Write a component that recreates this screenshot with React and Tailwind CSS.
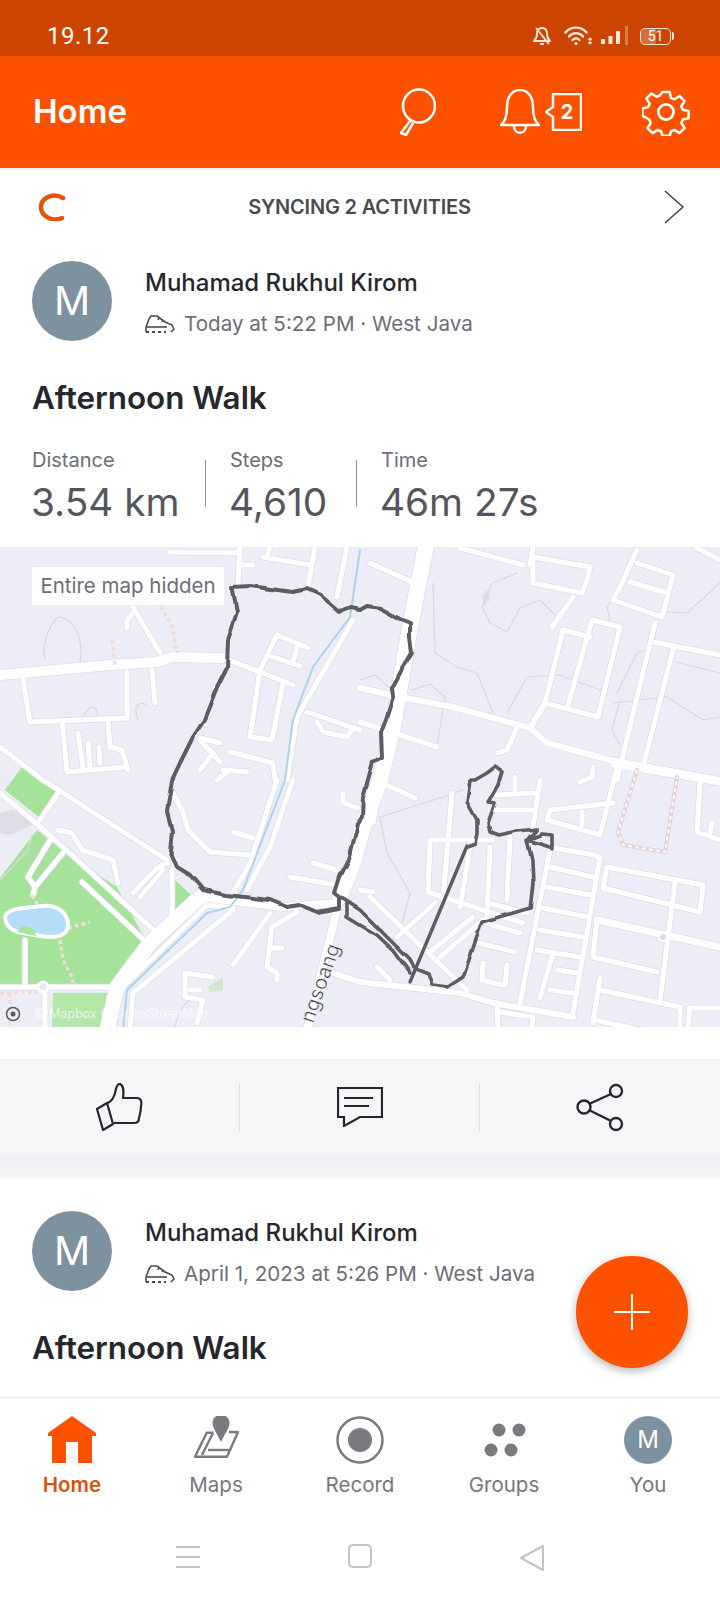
import React from "react";

const font = "font-[Inter,sans-serif]";

// all map coordinates are in page pixels, the svg viewBox starts at y=547
const bigRoads = [
  { w: 16, d: "M427 540L410 627L393 727L380 780L363 827L353 863L340 897" },
  { w: 8, d: "M340 897L332 930L307 1030" },
  { w: 10, d: "M0 675L110 665L157 662L173 657L223 658" },
  { w: 15, d: "M200 897L150 943L117 987L107 1030" },
  { w: 8, d: "M200 897L283 907L337 903" },
  { w: 6, d: "M333 973L360 982L460 993L493 1003L573 1017" },
  { w: 6, d: "M360 688L400 697L453 707L530 728L547 743L610 760L720 780" },
  { w: 7, d: "M597 920L720 947" },
  { w: 6, d: "M530 728L545 703" },
];

const roads = [
  "M170 552L240 553", "M240 548L238 583", "M240 565L253 565", "M263 557L310 565", "M270 547L267 557",
  "M315 547L308 587", "M347 547L337 597", "M133 607L160 653", "M133 613L127 620L127 628",
  "M23 680L30 722L127 718L127 672", "M152 670L155 703", "M62 720L67 772L125 767", "M108 722L110 747L122 750L128 770",
  "M78 733L83 767", "M88 743L90 767", "M99 747L100 763", "M0 747L43 780", "M223 658L260 672L293 685",
  "M277 635L308 648", "M277 635L260 670L250 737L272 740L283 683", "M297 647L293 662", "M267 655L300 666",
  "M353 620L297 717L287 780", "M307 712L360 730", "M317 722L323 732L347 737L353 728",
  "M277 780L250 863L233 893", "M293 780L270 847L247 890", "M200 738L220 743", "M200 740L220 762",
  "M230 752L273 763L275 780", "M213 753L200 770", "M223 770L247 772", "M230 770L217 780",
  "M43 780L167 860", "M0 793L52 837", "M60 790L40 820", "M52 837L28 877L35 887",
  "M58 830L72 833L82 850L113 860L118 883", "M63 853L35 887L33 895", "M52 837L157 933", "M82 882L147 943",
  "M133 893L157 868L167 863", "M140 897L163 870", "M172 870L172 920", "M25 940L25 983", "M0 987L110 987", "M45 990L45 1030",
  "M233 965L270 913", "M297 912L272 927L267 967L277 973L277 980", "M270 948L282 948",
  "M185 973L213 977", "M185 973L185 997L203 1000L197 1023", "M190 990L200 990",
  "M233 832L253 838", "M173 793L183 812L188 830L210 852L250 855", "M313 863L337 870", "M290 877L337 885", "M343 793L343 803L358 808",
  "M233 908L207 905L125 985", "M233 910L133 993L130 1030",
  "M370 563L412 582", "M460 548L523 565", "M533 557L590 567L587 580L582 593L533 583Z", "M533 548L530 565",
  "M573 597L552 627", "M637 563L673 575L662 617L613 600L620 587L637 550", "M630 582L667 593", "M720 560L697 548",
  "M563 630L545 703L598 717L620 627L592 620L568 705", "M563 630L590 637", "M655 623L617 780", "M653 642L720 655",
  "M673 650L643 767", "M517 728L507 750L498 753", "M360 722L437 747",
  "M382 783L415 798", "M380 783L373 823", "M493 840L430 840L428 892L523 923", "M452 793L443 900", "M470 847L460 907",
  "M490 847L487 917", "M510 837L507 900", "M540 780L533 827", "M497 795L535 793", "M495 810L533 810", "M515 777L515 790",
  "M550 850L520 1003", "M600 857L573 1013", "M553 848L595 855L600 860", "M550 867L593 877", "M547 887L590 895",
  "M543 908L587 917", "M540 930L583 937", "M537 950L580 957", "M553 953L540 998", "M557 970L577 973", "M550 990L573 993",
  "M488 903L527 913", "M485 923L520 933", "M478 943L515 952", "M483 963L482 980L503 985", "M507 965L505 985",
  "M370 897L467 990", "M360 890L373 892", "M397 937L435 903", "M440 957L483 920", "M430 952L473 917", "M377 967L390 980",
  "M607 867L703 885L700 912L603 888Z", "M675 883L660 1000", "M597 920L593 957L657 972",
  "M550 810L547 820L600 835L617 767", "M550 810L613 803", "M582 812L582 825", "M580 782L592 777L593 767",
  "M700 783L697 832L720 840", "M613 765L720 783", "M712 823L710 833",
  "M600 978L593 1023", "M600 990L680 1007L680 1030", "M595 1020L640 1030", "M690 1008L720 1008", "M690 1008L688 1030",
  "M497 1003L498 1030", "M500 1012L533 1017L532 1030",
];

const paths = [
  "M160 607L172 625L177 653", "M112 640L115 665", "M68 928L90 922", "M60 940L63 960L72 977L73 983", "M32 895L38 906",
  "M0 993L38 992", "M10 993L10 1030",
];

const contours = [
  "M433 583L435 653L457 667L477 673L493 713", "M482 607L492 583L517 573", "M482 607L490 623L507 632L520 608L540 600L557 617",
  "M507 713L527 677L560 675L600 690", "M610 620L607 607L623 583", "M720 583L687 613L667 612", "M617 693L637 653L650 648",
  "M675 662L720 673", "M613 703L667 697L703 720L720 717", "M380 817L387 853L410 893L400 930", "M380 817L443 797L463 790",
  "M45 660C40 640 55 616 60 617C75 620 84 640 80 662", "M82 722C85 708 95 702 97 712C98 718 96 722 95 722",
  "M138 720C132 705 140 700 146 705", "M360 680L375 675L392 690", "M412 690L430 684L445 697L437 747",
  "M620 700L612 730L620 745", "M0 880L28 850L32 835", "M175 1027C180 1000 195 995 205 1000",
];

const track1 =
  "M232 587L250 586L293 592L307 589L320 595L340 612L350 608L360 610L367 606L380 608L400 619L410 623L410 638L412 653L400 673L392 688L393 697L385 722L381 733L382 757L373 762L363 797L362 817L358 823L350 857L340 877L335 893L340 897L340 908L317 912L300 905L287 907L270 900L227 895L203 890L190 875L177 867L170 850L172 833L167 810L172 780L180 763L193 737L203 722L217 687L227 667L228 640L237 612L233 590Z";
const track2 =
  "M340 897L360 910L380 930L407 957L413 967L428 973L432 985L448 987L463 977L470 957L482 922L530 908L533 883L532 860L527 840L553 848L553 835L542 834L527 840L537 829L517 831L498 835L490 832L488 823L495 803L488 802L498 785L502 772L495 767L487 773L475 780L470 780L467 802L477 820L477 833L475 843L467 846";
const track3 = "M347 903L347 917L360 925L377 935L393 950L410 973";

const MapView = () => (
  <div className="relative h-[480px] w-full shrink-0 overflow-hidden bg-[#ecedf7]">
    <svg width="720" height="480" viewBox="0 547 720 480" className="block" fill="none" strokeLinecap="round" strokeLinejoin="round">
      <defs>
        <filter id="rough">
          <feTurbulence type="fractalNoise" baseFrequency="0.055" numOctaves="1" seed="4" />
          <feDisplacementMap in="SourceGraphic" scale="5" xChannelSelector="R" yChannelSelector="G" />
        </filter>
      </defs>
      <path d="M0 813L18 808L32 825L10 835L0 833Z" fill="#dedfe6" />
      <path d="M482 595L488 590L490 600L484 606Z" fill="#dedfe6" />
      <path d="M0 878L37 830L70 857L117 887L147 943L130 955L110 985L0 985Z" fill="#a5e39a" />
      <path d="M22 767L58 790L40 818L5 790Z" fill="#a5e39a" />
      <path d="M175 880L193 897L175 917Z" fill="#a5e39a" />
      <path d="M53 993L107 993L103 1027L52 1027Z" fill="#b2e7a9" />
      <path d="M208 987L223 977L223 990L210 992Z" fill="#cfe8cd" />
      {contours.map((d, i) => (
        <path key={i} d={d} stroke="#d7d8e2" strokeWidth="1.2" />
      ))}
      {roads.map((d, i) => (
        <path key={i} d={d} stroke="#dcdde6" strokeWidth="6.5" />
      ))}
      {bigRoads.map((r, i) => (
        <path key={i} d={r.d} stroke="#dcdde6" strokeWidth={r.w + 1.5} />
      ))}
      {roads.map((d, i) => (
        <path key={i} d={d} stroke="#ffffff" strokeWidth="5" />
      ))}
      {bigRoads.map((r, i) => (
        <path key={i} d={r.d} stroke="#ffffff" strokeWidth={r.w} />
      ))}
      <path d="M637 770L618 832L623 845L665 852L677 777" stroke="#e6cfd6" strokeWidth="4" />
      <path d="M637 770L618 832L623 845L665 852L677 777" stroke="#ffffff" strokeWidth="2" strokeDasharray="4 3" strokeLinecap="butt" />
      {paths.map((d, i) => (
        <path key={i} d={d} stroke="#f0dcd8" strokeWidth="3.5" strokeDasharray="4 3" strokeLinecap="butt" />
      ))}
      <path d="M360 550L350 617L313 667L293 720L285 780L243 890L230 907L207 913L127 990L123 1030" stroke="#a9d4ec" strokeWidth="2" />
      <path d="M5 918C6 908 22 908 42 906C56 904 68 912 68 925C68 938 52 938 40 936C28 932 8 936 5 918Z" fill="#b3ddf9" stroke="#ffffff" strokeWidth="4" />
      <path d="M17 932C22 922 34 925 36 936Z" fill="#a5e39a" />
      <circle cx="43" cy="987" r="5" fill="#e5e6ee" stroke="#ffffff" strokeWidth="3" />
      <circle cx="663" cy="937" r="4" fill="#d9dae4" stroke="#ffffff" strokeWidth="2" />
      <text x="0" y="0" transform="translate(313 1024) rotate(-70.5)" fontFamily="Inter, sans-serif" fontSize="20" fill="#3c3d44" stroke="#ffffff" strokeWidth="0.4">
        ngsoang
      </text>
      <g filter="url(#rough)">
        <path d={track1} stroke="#5c5d63" strokeWidth="4" />
        <path d={track2} stroke="#5c5d63" strokeWidth="3.6" />
        <path d={track3} stroke="#5c5d63" strokeWidth="3.6" />
      </g>
      <path d="M467 846L410 982" stroke="#5c5d63" strokeWidth="3.4" />
      <circle cx="13" cy="1014" r="6.5" fill="#ecedf0" stroke="#5a5b61" strokeWidth="1.5" />
      <circle cx="13" cy="1014" r="2.5" fill="#5a5b61" />
      <text x="34" y="1018" fontFamily="Inter, sans-serif" fontSize="12.5" fill="#ffffff" fillOpacity="0.7">
        © Mapbox © OpenStreetMap
      </text>
    </svg>
    <div className="absolute left-[32px] top-[20px] flex h-[38px] w-[192px] items-center justify-center rounded-[2px] bg-white text-[20.5px] text-[#6d6d78]">
      Entire map hidden
    </div>
  </div>
);

const ShoeIcon = () => (
  <svg width="31" height="19" viewBox="0 0 31 19" fill="none" stroke="#4a4b52" strokeWidth="1.6" strokeLinejoin="round">
    <path d="M1 12L4 4L6 1H12L20 7L27 10L29 14L26 17" />
    <path d="M1 12H22" />
    <path d="M1 12V17" />
    <path d="M14 3L13 5M18 5L17 7" />
    <path d="M1 17H4M7 17H10M13 17H16M19 17H21" strokeWidth="1.8" />
  </svg>
);

const Card = ({ top, when }) => (
  <div className={`${top} px-[32px]`}>
    <div className="flex h-[80px] gap-[33px]">
      <div className="flex h-[80px] w-[80px] shrink-0 items-center justify-center rounded-full bg-[#7d919f] text-[40px] text-white">M</div>
      <div className="flex flex-col">
        <div className="mt-[6px] text-[24px] leading-[32px] font-medium text-[#26272c]">Muhamad Rukhul Kirom</div>
        <div className="mt-[9px] flex h-[32px] items-center gap-[8px] text-[20.6px] text-[#6d6d78]">
          <ShoeIcon />
          <span>{when}</span>
        </div>
      </div>
    </div>
    <div className="mt-[37px] text-[31.4px] leading-[40px] font-semibold text-[#26272c]">Afternoon Walk</div>
  </div>
);

const Stat = ({ label, value, width }) => (
  <div className={width}>
    <div className="h-[30px] text-[20px] leading-[30px] text-[#6d6d78]">{label}</div>
    <div className="mt-[2px] -ml-[1px] text-[38.8px] leading-[50px] text-[#55565d]">{value}</div>
  </div>
);

const IconBell = () => (
  <svg width="40" height="46" viewBox="0 0 40 46" fill="none" stroke="white" strokeWidth="2.5" strokeLinejoin="round">
    <path d="M1 36C6 32 7 26 7 18C7 8 12 1 20 1C28 1 33 8 33 18C33 26 34 32 39 36Z" />
    <path d="M14 37C14 46 26 46 26 37" />
  </svg>
);

const Header = () => (
  <div className="flex h-[112px] shrink-0 items-center bg-[#fc5200] pl-[33px] text-white">
    <div className="w-[95px] text-[33px] font-semibold">Home</div>
    <svg className="ml-[272px]" width="36" height="48" viewBox="0 0 36 48" fill="none" stroke="white" strokeWidth="2.5">
      <ellipse cx="19" cy="18" rx="16" ry="16.5" />
      <path d="M10 33L1 45L6 47L13 35" strokeLinejoin="round" />
    </svg>
    <div className="ml-[64px]">
      <IconBell />
    </div>
    <div className="relative ml-[5px] flex h-[38px] w-[37px] items-center justify-center">
      <svg className="absolute inset-0" width="37" height="38" viewBox="0 0 37 38" fill="none" stroke="white" strokeWidth="2.5" strokeLinejoin="round">
        <path d="M8 1H36V37H8V24L1 19L8 14Z" />
      </svg>
      <span className="relative ml-[7px] text-[20px] font-bold">2</span>
    </div>
    <svg className="ml-[60px]" width="48" height="48" viewBox="0 0 24 24" fill="none" stroke="white" strokeWidth="1.4" strokeLinejoin="round">
      <circle cx="12" cy="12" r="3.8" />
      <path d="M10 1h4l.7 3.2 1.9.8 2.8-1.8 2.8 2.8-1.8 2.8.8 1.9 3.2.7v4l-3.2.7-.8 1.9 1.8 2.8-2.8 2.8-2.8-1.8-1.9.8-.7 2.5h-4l-.7-2.5-1.9-.8-2.8 1.8-2.8-2.8 1.8-2.8-.8-1.9L-1 14v-4l3.2-.7.8-1.9L1.2 4.6 4 1.8l2.8 1.8 1.9-.8z" transform="translate(1.1 1.1) scale(.91)" />
    </svg>
  </div>
);

const StatusBar = () => (
  <div className="flex h-[56px] shrink-0 items-center bg-[#cc4400] pt-[16px] pl-[47px] text-white">
    <div className="w-[486px] font-[Roboto,sans-serif] text-[24px] tracking-[0.5px]">19.12</div>
    <svg width="18" height="20" viewBox="0 0 18 20" fill="none" stroke="#ffe9dd" strokeWidth="1.9">
      <path d="M1 15C3 13 4 11 4 8C4 4 6 2 9 2C12 2 14 4 14 8C14 11 15 13 17 15Z" strokeLinejoin="round" />
      <path d="M7 18H11" />
      <path d="M3 2L16 18" />
    </svg>
    <svg className="ml-[13px]" width="28" height="20" viewBox="0 0 28 20" fill="none" stroke="#ffe9dd" strokeWidth="2.4" strokeLinecap="round">
      <path d="M1.500 6.500C7 0 17 0 22.500 6.500" />
      <path d="M5 10.500C9 6 15 6 19 10.500" />
      <path d="M8.500 14C10.500 12 13.500 12 15.500 14" />
      <circle cx="12" cy="17.500" r="1.500" fill="#ffe9dd" stroke="none" />
      <path d="M26 12V18M24.500 13.500L26 12L27.500 13.500M24.500 16.500L26 18L27.500 16.500" strokeWidth="1.100" />
    </svg>
    <svg className="ml-[9px]" width="28" height="20" viewBox="0 0 28 20" fill="#ffe9dd">
      <rect x="0" y="13" width="4" height="5" />
      <rect x="7.500" y="10" width="4" height="8" />
      <rect x="15" y="5" width="4" height="13" />
      <rect x="24" y="0" width="3" height="19" fill="#dd7a4a" />
    </svg>
    <div className="relative ml-[11px] flex h-[17px] w-[31px] items-center justify-center overflow-hidden rounded-[5px] border-[1.500px] border-[#ffe9dd] font-[Roboto,sans-serif] text-[14px] leading-none">
      <div className="absolute inset-y-0 left-0 w-[52%] bg-[#ffe9dd]/25" />
      <span className="relative">51</span>
    </div>
    <div className="ml-[1px] h-[8px] w-[2px] rounded-r-sm bg-[#ffe9dd]" />
  </div>
);

const SyncRow = () => (
  <div className="relative flex h-[72px] shrink-0 items-center justify-between bg-white pt-[6px] pr-[36px] pl-[38px] shadow-[inset_0_3px_3px_-2px_rgba(0,0,0,0.12)]">
    <svg width="28" height="28" viewBox="0 0 28 28" fill="none" stroke="#e2550f" strokeWidth="4.500" strokeLinecap="round">
      <path d="M25 5C15 -1 3 5 3 14C3 24 15 29 24 25" />
    </svg>
    <div className="mr-[11px] text-[20px] font-semibold tracking-[-0.2px] text-[#4a4b52]">SYNCING 2 ACTIVITIES</div>
    <svg width="20" height="34" viewBox="0 0 20 34" fill="none" stroke="#3c3d44" strokeWidth="1.500">
      <path d="M1 1L19 17L1 33" />
    </svg>
  </div>
);

const ActionBar = () => (
  <>
    <div className="mt-[32px] flex h-[96px] shrink-0 items-center bg-[#f6f6f9]">
      <div className="flex h-[48px] w-[240px] items-center justify-center border-r border-[#dedfe5]">
        <svg width="47" height="48" viewBox="0 0 47 48" fill="none" stroke="#26272c" strokeWidth="2.200" strokeLinejoin="round">
          <path d="M1 26L11 20L17 41L7 47Z" />
          <path d="M11 20C16 19 19 12 20 6C21 2 22 1 24 1C27 2 28 8 27 15H41C45 15 46 19 45 23C45 28 44 31 43 35C43 38 41 40 38 40H18" />
        </svg>
      </div>
      <div className="flex h-[48px] w-[240px] items-center justify-center border-r border-[#dedfe5]">
        <svg width="46" height="40" viewBox="0 0 46 40" fill="none" stroke="#26272c" strokeWidth="2.200">
          <path d="M1 1H45V30H23L7 39V30H1Z" />
          <path d="M7 11H36M7 19H32" />
        </svg>
      </div>
      <div className="flex flex-1 items-center justify-center">
        <svg width="48" height="48" viewBox="0 0 48 48" fill="none" stroke="#26272c" strokeWidth="2.400">
          <circle cx="40" cy="8" r="6" />
          <circle cx="8" cy="24" r="6.500" />
          <circle cx="40" cy="41" r="6" />
          <path d="M13 21L35 11M13 27L35 38" />
        </svg>
      </div>
    </div>
    <div className="h-[23px] shrink-0 bg-gradient-to-b from-[#efeff3] to-[#f5f5f8]" />
  </>
);

const navItems = [
  { label: "Home", active: true, icon: (
    <svg width="48" height="48" viewBox="0 0 48 48" fill="#fc5200">
      <path d="M24 0L48 17V20H44V47H30V26H18V47H4V20H0V17Z" />
    </svg>
  ) },
  { label: "Maps", icon: (
    <svg width="48" height="48" viewBox="0 0 48 48" fill="none" stroke="#7a7a80" strokeWidth="2.400" strokeLinejoin="round">
      <path d="M21.500 16.700H14.700L3 40.700H35L46 16H37" />
      <path d="M21 17L10 39" />
      <path d="M16 34H38" />
      <path d="M29 -1C23 -1 20.500 3 20.500 7.500C21 13 26 19 29 26C32 19 37 13 37.500 7.500C37.500 3 35 -1 29 -1Z" fill="#7a7a80" stroke="none" />
    </svg>
  ) },
  { label: "Record", icon: (
    <svg width="48" height="48" viewBox="0 0 48 48">
      <circle cx="24" cy="24" r="22.500" fill="none" stroke="#7a7a80" strokeWidth="2.500" />
      <circle cx="24" cy="24" r="12" fill="#7a7a80" />
    </svg>
  ) },
  { label: "Groups", icon: (
    <svg width="48" height="48" viewBox="0 0 48 48" fill="#7a7a80">
      <circle cx="19" cy="14" r="6.500" />
      <circle cx="39" cy="14" r="6.500" />
      <circle cx="11" cy="34" r="6.500" />
      <circle cx="31" cy="34" r="6.500" />
    </svg>
  ) },
  { label: "You", icon: (
    <div className="flex h-[48px] w-[48px] items-center justify-center rounded-full bg-[#7d919f] text-[24px] text-white">M</div>
  ) },
];

const BottomNav = () => (
  <div className="shrink-0 border-t-[3px] border-[#f5f5f7] bg-white">
    <div className="flex h-[107px] pt-[17px]">
      {navItems.map((item) => (
        <div key={item.label} className="flex w-[144px] flex-col items-center">
          {item.icon}
          <div className={`mt-[7px] text-[20.500px] leading-[28px] ${item.active ? "font-semibold text-[#d9530f]" : "text-[#77777d]"}`}>{item.label}</div>
        </div>
      ))}
    </div>
    <div className="flex h-[94px] items-start justify-center pt-[38px]">
      <svg width="24" height="26" viewBox="0 0 24 26" stroke="#c4c4c8" strokeWidth="2">
        <path d="M0 3H24M0 13H24M0 23H24" />
      </svg>
      <div className="ml-[148px] h-[24px] w-[24px] rounded-[5px] border-2 border-[#c4c4c8]" />
      <svg className="ml-[147px]" width="26" height="28" viewBox="0 0 26 28" fill="none" stroke="#c4c4c8" strokeWidth="2" strokeLinejoin="round">
        <path d="M24 2V26L2 14Z" />
      </svg>
    </div>
  </div>
);

export default function App() {
  return (
    <div className={`${font} relative flex h-[1600px] w-[720px] flex-col overflow-hidden bg-white`}>
      <StatusBar />
      <Header />
      <SyncRow />
      <div className="min-h-0 flex-1 overflow-hidden">
        <Card top="pt-[21px]" when="Today at 5:22 PM · West Java" />
        <div className="mt-[27px] flex h-[72px] px-[32px]">
          <Stat label="Distance" value="3.54 km" width="w-[173px]" />
          <div className="mt-[15px] mr-[24px] h-[47px] w-px bg-[#8e8e95]" />
          <Stat label="Steps" value="4,610" width="w-[126px]" />
          <div className="mt-[15px] mr-[24px] h-[47px] w-px bg-[#8e8e95]" />
          <Stat label="Time" value="46m 27s" width="w-[200px]" />
        </div>
        <div className="h-[30px]" />
        <MapView />
        <ActionBar />
        <Card top="pt-[33px]" when="April 1, 2023 at 5:26 PM · West Java" />
      </div>
      <BottomNav />
      <button className="absolute left-[576px] top-[1256px] flex h-[112px] w-[112px] items-center justify-center rounded-full bg-[#fc5200] shadow-[0_3px_10px_rgba(0,0,0,0.3)]">
        <svg width="38" height="38" viewBox="0 0 38 38" stroke="white" strokeWidth="2">
          <path d="M19 1V37M1 19H37" />
        </svg>
      </button>
    </div>
  );
}
